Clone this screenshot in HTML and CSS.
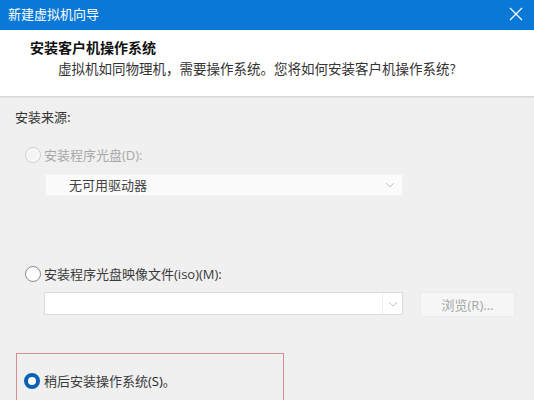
FILE: index.html
```html
<!DOCTYPE html>
<html lang="zh-CN">
<head>
<meta charset="utf-8">
<title>新建虚拟机向导</title>
<link rel="stylesheet" href="styles.css">
</head>
<body>
<div class="window">
  <div class="titlebar">
    <span class="title">新建虚拟机向导</span>
    <span class="close">
      <svg width="14" height="14" viewBox="0 0 14 14"><path d="M1 1 L13 13 M13 1 L1 13" stroke="#fff" stroke-width="1.2" fill="none"/></svg>
    </span>
  </div>
  <div class="header">
    <div class="h-title">安装客户机操作系统</div>
    <div class="h-sub">虚拟机如同物理机，需要操作系统。您将如何安装客户机操作系统?</div>
  </div>
  <div class="content">
    <div class="label">安装来源:</div>

    <div class="radio-row disabled first">
      <span class="radio radio-disabled"></span>
      <span class="rtext">安装程序光盘<span class="lat">(D):</span></span>
    </div>
    <div class="select select-disabled">
      <span class="sel-text">无可用驱动器</span>
      <svg class="chev" width="10" height="6" viewBox="0 0 10 6"><path d="M1 1 L5 5 L9 1" stroke="#c4c4c4" stroke-width="1" fill="none"/></svg>
    </div>

    <div class="radio-row second">
      <span class="radio"></span>
      <span class="rtext">安装程序光盘映像文件<span class="lat">(iso)(M):</span></span>
    </div>
    <div class="iso-row">
      <div class="combo">
        <span class="combo-field"></span>
        <span class="combo-btn">
          <svg width="10" height="6" viewBox="0 0 10 6"><path d="M1 1 L5 5 L9 1" stroke="#c4c4c4" stroke-width="1" fill="none"/></svg>
        </span>
      </div>
      <div class="button">浏览<span class="lat">(R)...</span></div>
    </div>

    <div class="later-box">
      <div class="radio-row">
        <span class="radio radio-checked"></span>
        <span class="rtext">稍后安装操作系统<span class="lat dark">(S)</span>。</span>
      </div>
    </div>
  </div>
</div>
</body>
</html>
```
FILE: styles.css
```css
html, body {
  margin: 0;
  padding: 0;
}
body {
  width: 534px;
  height: 400px;
  overflow: hidden;
  background: #f0f0f0;
  font-family: "Noto Sans CJK SC", "Noto Sans", sans-serif;
  font-size: 13px;
  color: #3a3a3a;
}
.window {
  width: 534px;
  height: 400px;
  display: flex;
  flex-direction: column;
}
.titlebar {
  height: 30px;
  background: #0a78d7;
  display: flex;
  align-items: center;
  justify-content: space-between;
  padding-left: 8px;
  padding-right: 11px;
  flex-shrink: 0;
}
.title {
  color: #fff;
  font-size: 13px;
  line-height: 18px;
  margin-top: -3px;
}
.close {
  display: flex;
  margin-top: -2px;
}
.header {
  height: 67px;
  background: #fff;
  border-bottom: 1px solid #d8d8d8;
  box-sizing: border-box;
  padding-top: 8px;
  flex-shrink: 0;
}
.h-title {
  padding-left: 30px;
  font-weight: bold;
  font-size: 14px;
  line-height: 18px;
  color: #111;
}
.h-sub {
  padding-left: 58px;
  margin-top: 3px;
  font-size: 13.5px;
  line-height: 18px;
  color: #333;
}
.content {
  border-top: 1px solid #e4e4e4;
  padding-left: 15px;
  flex: 1;
}
.label {
  margin-top: 10px;
  line-height: 18px;
  color: #333;
}
.radio-row {
  display: flex;
  align-items: center;
  height: 18px;
  margin-left: 10px;
}
.radio-row.first {
  margin-top: 20px;
}
.radio-row.second {
  margin-top: 69px;
}
.radio {
  width: 14px;
  height: 14px;
  border: 1px solid #8a8a8a;
  border-radius: 50%;
  background: #fff;
  flex-shrink: 0;
}
.radio-disabled {
  border-color: #cfcfcf;
  background: #f4f4f4;
  box-shadow: inset 0 0 0 2px #fafafa;
}
.radio-checked {
  width: 8px;
  height: 8px;
  border: 4px solid #0b62b5;
  background: #fff;
}
.rtext {
  margin-left: 3px;
  line-height: 18px;
  color: #3a3a3a;
}
.disabled .rtext {
  color: #a8a8a8;
}
.lat {
  font-family: "Open Sans", "Noto Sans", sans-serif;
  font-size: 13px;
}
.dark {
  color: #222;
}
.select {
  margin-top: 10px;
  margin-left: 30px;
  width: 358px;
  height: 22px;
  box-sizing: border-box;
  display: flex;
  align-items: center;
  justify-content: space-between;
  padding-left: 23px;
  padding-right: 7px;
}
.select-disabled {
  background: #fbfbfb;
  border: 1px solid #f3f3f3;
}
.sel-text {
  color: #444;
  line-height: 18px;
}
.iso-row {
  display: flex;
  align-items: flex-start;
  margin-top: 9px;
  margin-left: 29px;
}
.combo {
  width: 359px;
  height: 23px;
  box-sizing: border-box;
  border: 1px solid #dcdcdc;
  background: #fff;
  display: flex;
}
.combo-field {
  flex: 1;
}
.combo-btn {
  width: 19px;
  border-left: 1px solid #ececec;
  display: flex;
  align-items: center;
  justify-content: center;
}
.button {
  margin-left: 17px;
  width: 95px;
  height: 25px;
  box-sizing: border-box;
  border: 1px solid #ebebeb;
  background: #f6f6f6;
  color: #a6a6a6;
  display: flex;
  align-items: center;
  justify-content: center;
  line-height: 18px;
}
.later-box {
  margin-top: 36px;
  margin-left: 1px;
  width: 268px;
  height: 60px;
  box-sizing: border-box;
  border: 1px solid #d58f8f;
  padding-top: 18px;
  padding-left: 7px;
}
.later-box .radio-row {
  margin-left: 0;
}
.later-box .rtext {
  margin-left: 4px;
}
```
